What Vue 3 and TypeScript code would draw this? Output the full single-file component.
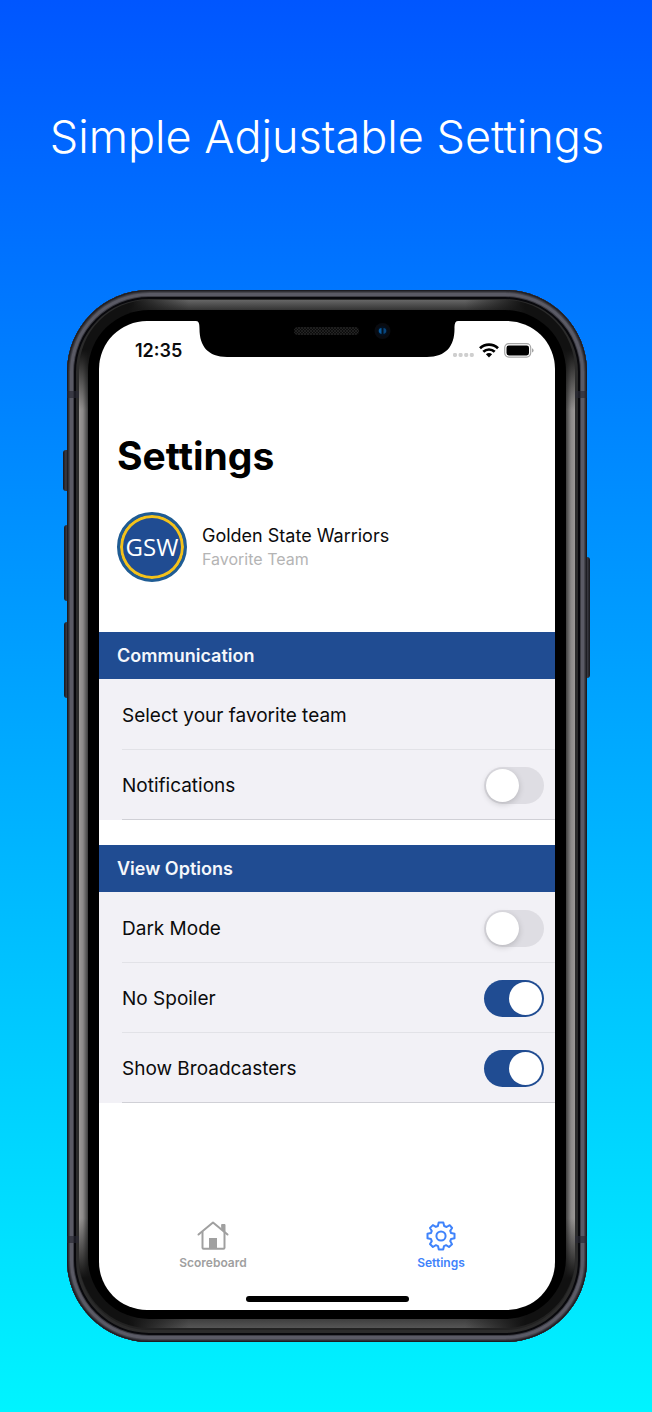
<script setup lang="ts">
import { reactive } from 'vue'

interface Option {
  id: string
  label: string
  toggle: boolean
  on: boolean
}

interface Section {
  title: string
  options: Option[]
}

const sections = reactive<Section[]>([
  {
    title: 'Communication',
    options: [
      { id: 'favorite', label: 'Select your favorite team', toggle: false, on: false },
      { id: 'notifications', label: 'Notifications', toggle: true, on: false },
    ],
  },
  {
    title: 'View Options',
    options: [
      { id: 'dark-mode', label: 'Dark Mode', toggle: true, on: false },
      { id: 'no-spoiler', label: 'No Spoiler', toggle: true, on: true },
      { id: 'broadcasters', label: 'Show Broadcasters', toggle: true, on: true },
    ],
  },
])
</script>

<template>
  <main class="page">
    <h2 class="headline">Simple Adjustable Settings</h2>

    <div class="device">
      <span class="key key-mute"></span>
      <span class="key key-up"></span>
      <span class="key key-down"></span>
      <span class="key key-power"></span>

      <div class="rail">
        <span class="antenna antenna-top"></span>
        <span class="antenna antenna-bottom"></span>
        <div class="bevel">
          <div class="bezel">
            <svg class="notch" width="262" height="36" viewBox="0 0 262 36" aria-hidden="true">
              <defs>
                <pattern id="mesh" width="3" height="3" patternUnits="userSpaceOnUse">
                  <rect width="3" height="3" fill="#0c0c0c" />
                  <circle cx="1" cy="1" r="0.8" fill="#333" />
                  <circle cx="2.5" cy="2.5" r="0.6" fill="#2b2b2b" />
                </pattern>
              </defs>
              <path d="M0 0C3 0 3.500 3 3.500 8C3.500 25 12 36 31 36H231C250 36 258.500 25 258.500 8C258.500 3 259 0 262 0Z" fill="#000" />
              <rect x="98" y="6" width="65" height="8" rx="4" fill="url(#mesh)" />
              <circle cx="186.500" cy="10" r="8" fill="#090b10" />
              <circle cx="186.500" cy="10" r="5" fill="#03101f" />
              <path d="M185.500 7C182 7 181.500 12 185.500 13Z" fill="#0a5a9c" />
              <path d="M187.500 7C191 7 191.500 12 187.500 13Z" fill="#08467e" />
            </svg>

            <div class="screen">
              <div class="status">
                <span class="time">12:35</span>
                <div class="status-icons">
                  <svg class="dots" width="21" height="4" viewBox="0 0 21 4" aria-hidden="true">
                    <rect v-for="n in 4" :key="n" :x="(n - 1) * 5.6" y="0" width="4" height="4" rx="1.4" fill="#cfcfcf" />
                  </svg>
                  <svg width="20" height="15" viewBox="0 0 20 15" fill="none" stroke="#000" stroke-width="2.700" aria-hidden="true">
                    <path d="M1 5.300C6 .4 14 .4 19 5.300" />
                    <path d="M4.300 8.800C7.500 5.700 12.500 5.700 15.700 8.800" />
                    <path d="M6.900 11.200C8.700 9.600 11.300 9.600 13.100 11.200L10 14.400Z" fill="#000" stroke="none" />
                  </svg>
                  <svg width="30" height="15" viewBox="0 0 30 15" aria-hidden="true">
                    <rect x="0.700" y="0.700" width="26" height="13.400" rx="4" fill="none" stroke="#a6a6a6" stroke-width="1.200" />
                    <rect x="2.500" y="2.400" width="22.500" height="10" rx="2.300" fill="#000" />
                    <path d="M28 5.300Q29.600 5.900 29.600 7.400T28 9.500Z" fill="#a6a6a6" />
                  </svg>
                </div>
              </div>

              <h1 class="title">Settings</h1>

              <div class="team">
                <div class="badge">GSW</div>
                <div class="team-text">
                  <div class="team-name">Golden State Warriors</div>
                  <div class="team-note">Favorite Team</div>
                </div>
              </div>

              <section v-for="section in sections" :key="section.title" class="section">
                <h3 class="section-title">{{ section.title }}</h3>
                <div class="rows">
                  <template v-for="option in section.options" :key="option.id">
                    <label v-if="option.toggle" class="row" :for="option.id">
                      <span>{{ option.label }}</span>
                      <input :id="option.id" v-model="option.on" class="switch" type="checkbox" role="switch" />
                    </label>
                    <button v-else class="row" type="button">{{ option.label }}</button>
                  </template>
                </div>
              </section>

              <nav class="tabs">
                <a class="tab" href="#scoreboard">
                  <svg width="34" height="30" viewBox="0 0 34 30" fill="none" stroke="currentColor" stroke-width="2" stroke-linejoin="round" stroke-linecap="round" aria-hidden="true">
                    <path d="M2.500 13.500L17 1.500L31.500 13.500" />
                    <path d="M6.500 11V26.800Q6.500 27.800 7.500 27.800H27.500Q28.500 27.800 28.500 26.800V11" />
                    <path d="M26 3.500H29V10.500L26 8Z" fill="currentColor" stroke-width="1" />
                    <path d="M13 17H21V28H13Z" fill="currentColor" stroke="none" />
                  </svg>
                  <span>Scoreboard</span>
                </a>
                <a class="tab active" href="#settings" aria-current="page">
                  <svg width="30" height="30" viewBox="0 0 30 30" fill="none" stroke="currentColor" stroke-width="2" stroke-linejoin="round" aria-hidden="true">
                    <path d="M12.700 1.500H17.300L18.200 5L20.600 6L23.700 4.200L26.100 7L24.200 9.900L25.100 12L28.500 12.800V17.200L25.100 18L24.200 20.100L26 23.200L23 26L20.100 24.200L18 25.100L17.200 28.500H12.800L12 25.100L9.900 24.200L6.900 26L4 23L5.800 20.100L4.900 18L1.500 17.200V12.800L4.900 12L5.800 9.900L4 6.900L6.900 4.100L9.900 5.900L11.900 5Z" />
                    <circle cx="15" cy="15" r="4.600" />
                  </svg>
                  <span>Settings</span>
                </a>
              </nav>
              <div class="home-indicator"></div>
            </div>
          </div>
        </div>
      </div>
    </div>
  </main>
</template>

<style>
body {
  margin: 0;
}
</style>

<style scoped>
.page {
  box-sizing: border-box;
  min-height: 100vh;
  padding: 109px 65px 70px 67px;
  background: linear-gradient(#0056ff, #00f4ff);
  font-family: Inter, "Liberation Sans", sans-serif;
  color: #0b0b0c;
}

.headline {
  margin: 0 -60px 125px;
  font: 300 45px/56px Inter, "Open Sans", sans-serif;
  color: #fff;
  text-align: center;
}

.device {
  position: relative;
}

.key {
  position: absolute;
  left: -3px;
  width: 8px;
  height: 76px;
  border-radius: 3px;
  background: linear-gradient(90deg, #16161b, #3d3d45 3px, #16161b 5px);
}

.key-mute {
  top: 160px;
  left: -4px;
  height: 41px;
}

.key-up {
  top: 235px;
}

.key-down {
  top: 332px;
}

.key-power {
  top: 267px;
  right: -3px;
  left: auto;
  height: 121px;
  background: linear-gradient(270deg, #16161b, #3d3d45 3px, #16161b 5px);
}

.rail {
  position: relative;
  padding: 10px 12px 14px;
  border-radius: 82px;
  background: #222;
  box-shadow:
    inset 0 0 0 1px #1d1d23,
    inset 0 0 0 2px #303037,
    inset 0 0 0 3px #45454d,
    inset 0 0 0 6px #5a5a65,
    inset 0 0 0 7px #3c3c44,
    inset 0 0 0 9px #08080c,
    inset 0 0 0 12px #2b2b2b;
}

.antenna {
  position: absolute;
  right: 0;
  left: 0;
  height: 7px;
  background: rgb(40 40 50 / 65%);
}

.antenna-top {
  top: 101px;
}

.antenna-bottom {
  bottom: 99px;
}

.bevel {
  position: relative;
  padding: 10px 9px 9px;
  border-radius: 70px;
  background:
    radial-gradient(circle at 0 0, #111 50px, transparent 110px) top left / 110px 110px no-repeat,
    radial-gradient(circle at 100% 0, #111 50px, transparent 110px) top right / 110px 110px no-repeat,
    radial-gradient(circle at 0 100%, #111 50px, transparent 110px) bottom left / 110px 110px no-repeat,
    radial-gradient(circle at 100% 100%, #111 50px, transparent 110px) bottom right / 110px 110px no-repeat,
    linear-gradient(#666, #343434) top / calc(100% - 110px) 10px no-repeat,
    linear-gradient(#3e3e3e, #555) bottom / calc(100% - 110px) 9px no-repeat,
    linear-gradient(90deg, #9c9997, #8b8988 4px, #3f3f3f 9px, #3f3f3f calc(100% - 9px), #8b8988 calc(100% - 4px), #9c9997);
}

.bezel {
  position: relative;
  padding: 11px 11px 9px;
  border-radius: 61px;
  background: #000;
}

.notch {
  position: absolute;
  top: 11px;
  left: 50%;
  margin-left: -131px;
}

.screen {
  overflow: hidden;
  border-radius: 48px;
  background: #fff;
}

.status {
  display: flex;
  align-items: center;
  justify-content: space-between;
  height: 58px;
  padding: 0 21px 0 36px;
}

.time {
  font-size: 18px;
  font-weight: 600;
}

.status-icons {
  display: flex;
  align-items: center;
  gap: 5px;
}

.dots {
  margin-top: 9px;
}

.title {
  margin: 52px 18px 32px;
  font-size: 39px;
  font-weight: 700;
  line-height: 49px;
  color: #000;
}

.team {
  display: flex;
  align-items: center;
  gap: 15px;
  margin: 0 18px 50px;
}

.badge {
  display: flex;
  align-items: center;
  justify-content: center;
  box-sizing: border-box;
  width: 70px;
  height: 70px;
  border: 3px solid #1f5c94;
  border-radius: 50%;
  background: #204c92;
  box-shadow: inset 0 0 0 3px #f4c21a;
  font: 24px/24px "Open Sans", "Noto Sans", sans-serif;
  color: #fff;
}

.team-text {
  padding-top: 2px;
}

.team-name {
  font-size: 18px;
  line-height: 22px;
}

.team-note {
  font-size: 16px;
  line-height: 24px;
  color: #b4b4b4;
}

.section {
  margin-bottom: 25px;
}

.section-title {
  margin: 0;
  padding: 1px 18px 0;
  background: #204c92;
  font-size: 18px;
  font-weight: 600;
  line-height: 46px;
  color: #f5f7fb;
}

.rows {
  padding-top: 1px;
  background: #f2f1f6;
}

.row {
  display: flex;
  align-items: center;
  justify-content: space-between;
  box-sizing: border-box;
  width: 100%;
  height: 70px;
  padding: 1px 11px 0 23px;
  border: 0;
  background: linear-gradient(#e2e2e7, #e2e2e7) 23px 100% / 100% 1px no-repeat;
  font: 400 19px/24px Inter, "Liberation Sans", sans-serif;
  color: #0b0b0c;
  text-align: left;
}

.row:last-child {
  background-image: linear-gradient(#d0d0d6, #d0d0d6);
}

.switch {
  flex: none;
  width: 60px;
  height: 37px;
  margin: 0;
  padding: 2px;
  border-radius: 19px;
  background: #dedde3;
  appearance: none;
}

.switch::before {
  display: block;
  width: 33px;
  height: 33px;
  border-radius: 50%;
  background: #fff;
  box-shadow: 0 2px 6px rgb(0 0 0 / 18%);
  content: "";
}

.switch:checked {
  background: #204c92;
}

.switch:checked::before {
  margin-left: 23px;
  box-shadow: none;
}

.tabs {
  display: grid;
  grid-template-columns: 1fr 1fr;
  margin-top: 118px;
}

.tab {
  display: flex;
  flex-direction: column;
  align-items: center;
  gap: 4px;
  font-size: 12px;
  font-weight: 600;
  line-height: 16px;
  color: #a0a0a0;
  text-decoration: none;
}

.tab.active {
  color: #3f83fb;
}

.home-indicator {
  width: 163px;
  height: 6px;
  margin: 25px auto 8px;
  border-radius: 3px;
  background: #000;
}
</style>
